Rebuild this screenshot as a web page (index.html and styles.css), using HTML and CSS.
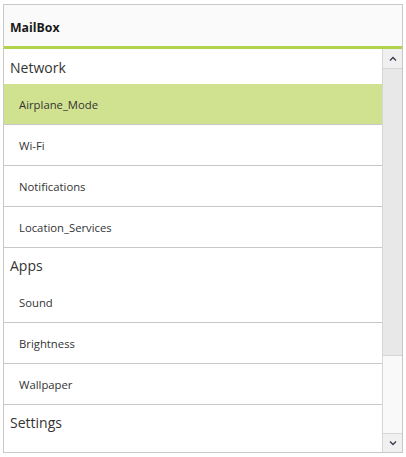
FILE: index.html
```html
<!DOCTYPE html>
<html>
<head>
<meta charset="utf-8">
<link rel="stylesheet" href="styles.css">
</head>
<body>
<div class="box">
  <div class="header">MailBox</div>
  <div class="body">
    <div class="list">
      <div class="group">Network</div>
      <div class="item selected">Airplane_Mode</div>
      <div class="item">Wi-Fi</div>
      <div class="item">Notifications</div>
      <div class="item">Location_Services</div>
      <div class="group">Apps</div>
      <div class="item">Sound</div>
      <div class="item">Brightness</div>
      <div class="item">Wallpaper</div>
      <div class="group">Settings</div>
    </div>
    <div class="scrollbar">
      <div class="sbtn">
        <svg width="8" height="6" viewBox="0 0 8 6"><path d="M1 4.5 L4 1.5 L7 4.5" fill="none" stroke="#3a3f50" stroke-width="1.4"/></svg>
      </div>
      <div class="thumb"></div>
      <div class="track"></div>
      <div class="sbtn down">
        <svg width="8" height="6" viewBox="0 0 8 6"><path d="M1 1.5 L4 4.5 L7 1.5" fill="none" stroke="#3a3f50" stroke-width="1.4"/></svg>
      </div>
    </div>
  </div>
</div>
</body>
</html>
```
FILE: styles.css
```css
html, body {
  margin: 0;
  padding: 0;
  background: #ffffff;
}
body {
  font-family: "Open Sans", "Noto Sans", sans-serif;
  color: #333333;
}
.box {
  margin: 4px 0 0 3px;
  width: 400px;
  height: 449px;
  box-sizing: border-box;
  border: 1px solid #c8c8c8;
  display: flex;
  flex-direction: column;
}
.header {
  box-sizing: border-box;
  height: 44px;
  background: #fafafa;
  border-bottom: 3px solid #b2d44c;
  font-size: 12.3px;
  font-weight: 700;
  color: #1a1a1a;
  padding: 4px 0 0 6px;
  display: flex;
  align-items: center;
  flex-shrink: 0;
}
.body {
  flex: 1;
  display: flex;
  min-height: 0;
}
.list {
  flex: 1;
  overflow: hidden;
  padding-top: 1px;
}
.group {
  height: 34px;
  display: flex;
  align-items: center;
  padding-left: 6px;
  font-size: 14px;
  color: #333333;
}
.item {
  height: 40px;
  border-bottom: 1px solid #c8c8c8;
  display: flex;
  align-items: center;
  padding-left: 15px;
  font-size: 11.3px;
  color: #333333;
}
.item.selected {
  background: #d0e290;
}
.scrollbar {
  width: 19px;
  border-left: 1px solid #d6d6d6;
  display: flex;
  flex-direction: column;
  background: #f7f7f7;
}
.sbtn {
  height: 19px;
  background: #f0f0f0;
  border-bottom: 1px solid #d6d6d6;
  display: flex;
  align-items: center;
  justify-content: center;
  flex-shrink: 0;
}
.sbtn.down {
  border-bottom: none;
  border-top: 1px solid #d6d6d6;
  height: 18px;
}
.thumb {
  height: 286px;
  background: #e8e8e8;
  border-bottom: 1px solid #d6d6d6;
  flex-shrink: 0;
}
.track {
  flex: 1;
  background: #f9f9f9;
}
```
